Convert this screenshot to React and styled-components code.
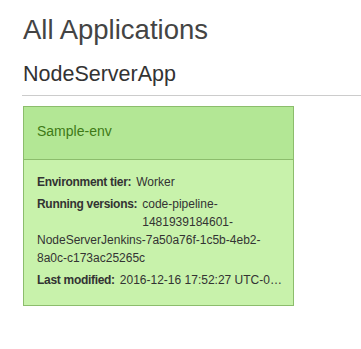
import React from 'react';
import styled, { createGlobalStyle } from 'styled-components';

const Global = createGlobalStyle`
  body {
    margin: 0;
    background: #fff;
    font-family: "Liberation Sans", Arial, sans-serif;
    color: #333;
  }
`;

const Page = styled.div`
  padding: 14px 0 0 22px;
`;

const Title = styled.h1`
  margin: 0 0 0 1px;
  font-size: 27.5px;
  line-height: 32px;
  font-weight: normal;
  color: #444;
`;

const AppName = styled.h2`
  margin: 15px 0 0 1px;
  font-size: 21.5px;
  line-height: 26px;
  font-weight: normal;
  color: #333;
`;

const Rule = styled.hr`
  margin: 8px 0 0 0;
  border: 0;
  border-top: 1px solid #ccc;
  height: 0;
`;

const Card = styled.div`
  margin: 10px 0 0 1px;
  width: 271px;
  box-sizing: border-box;
  border: 1px solid #8cbd6c;
  background: #c8f2ab;
`;

const CardHeader = styled.div`
  padding: 15px 13px 19px;
  background: #b3e795;
  border-bottom: 1px solid #8cbd6c;
  font-size: 14px;
  line-height: 18px;
  color: #3f7a17;
`;

const CardBody = styled.div`
  padding: 13px 5px 16px 13px;
  font-size: 12px;
  line-height: 18px;
  color: #333;
`;

const Row = styled.div`
  margin-bottom: ${(p) => (p.$last ? 0 : 4)}px;
  overflow: hidden;
  white-space: ${(p) => (p.$nowrap ? 'nowrap' : 'normal')};
  text-overflow: ellipsis;
`;

const Label = styled.span`
  font-weight: bold;
  letter-spacing: -0.3px;
  margin-right: 5px;
  ${(p) => p.$float && `float: left; height: 30px;`}
`;

const items = [
  { label: 'Environment tier:', value: 'Worker' },
  {
    label: 'Running versions:',
    value: 'code-pipeline-1481939184601-NodeServerJenkins-7a50a76f-1c5b-4eb2-8a0c-c173ac25265c',
    float: true,
  },
  { label: 'Last modified:', value: '2016-12-16 17:52:27 UTC-0800', nowrap: true },
];

export default function App() {
  return (
    <Page>
      <Global />
      <Title>All Applications</Title>
      <AppName>NodeServerApp</AppName>
      <Rule />
      <Card>
        <CardHeader>Sample-env</CardHeader>
        <CardBody>
          {items.map((it, i) => (
            <Row key={it.label} $nowrap={it.nowrap} $last={i === items.length - 1}>
              <Label $float={it.float}>{it.label}</Label>
              {it.value}
            </Row>
          ))}
        </CardBody>
      </Card>
    </Page>
  );
}
